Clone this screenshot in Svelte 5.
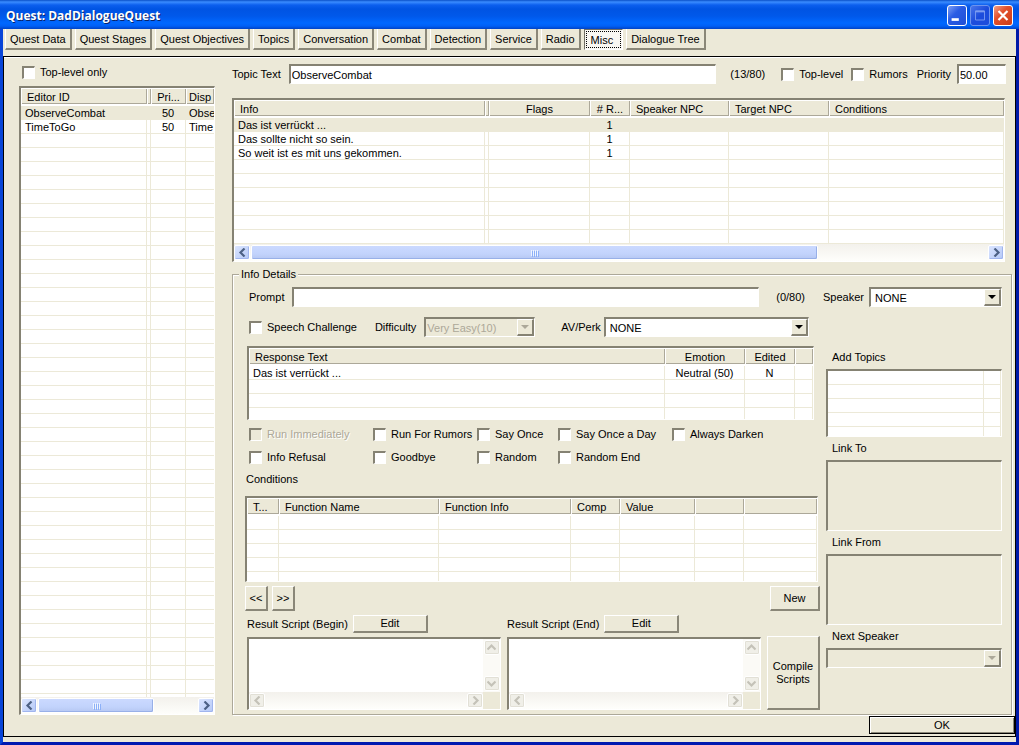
<script lang="ts">
  type Column = { label: string; width?: number; center?: boolean };

  const tabs = [
    'Quest Data', 'Quest Stages', 'Quest Objectives', 'Topics', 'Conversation', 'Combat',
    'Detection', 'Service', 'Radio', 'Misc', 'Dialogue Tree'
  ];
  let activeTab = $state('Misc');

  const topicColumns: Column[] = [
    { label: 'Editor ID', width: 126 },
    { label: '', width: 4 },
    { label: 'Pri...', width: 35, center: true },
    { label: 'Disp' }
  ];
  const topicRows = [
    ['ObserveCombat', '', '50', 'Obse'],
    ['TimeToGo', '', '50', 'Time']
  ];

  const infoColumns: Column[] = [
    { label: 'Info', width: 251 },
    { label: '', width: 4 },
    { label: 'Flags', width: 101, center: true },
    { label: '# R...', width: 40, center: true },
    { label: 'Speaker NPC', width: 99 },
    { label: 'Target NPC', width: 100 },
    { label: 'Conditions' }
  ];
  const infoRows = [
    ['Das ist verrückt ...', '', '', '1', '', '', ''],
    ['Das sollte nicht so sein.', '', '', '1', '', '', ''],
    ['So weit ist es mit uns gekommen.', '', '', '1', '', '', '']
  ];

  const responseColumns: Column[] = [
    { label: 'Response Text' },
    { label: 'Emotion', width: 80, center: true },
    { label: 'Edited', width: 50, center: true },
    { label: '', width: 18 }
  ];
  const responseRows = [['Das ist verrückt ...', 'Neutral (50)', 'N', '']];

  const conditionColumns: Column[] = [
    { label: 'T...', width: 32 },
    { label: 'Function Name', width: 160 },
    { label: 'Function Info', width: 132 },
    { label: 'Comp', width: 49 },
    { label: 'Value', width: 75 },
    { label: '', width: 49 },
    { label: '' }
  ];

  const flags = [
    { label: 'Run Immediately', disabled: true },
    { label: 'Run For Rumors' },
    { label: 'Say Once' },
    { label: 'Say Once a Day' },
    { label: 'Always Darken' },
    { label: 'Info Refusal' },
    { label: 'Goodbye' },
    { label: 'Random' },
    { label: 'Random End' }
  ];
</script>

{#snippet check(label: string, disabled = false)}
  <label class="check" class:disabled>
    <input type="checkbox" {disabled} />
    {label}
  </label>
{/snippet}

{#snippet arrow(dir: string)}
  <svg class="arrow {dir}" viewBox="0 0 9 9" width="9" height="9" aria-hidden="true">
    <path d="M6.5 0.5 L2.5 4.5 L6.5 8.5" fill="none" stroke="currentColor" stroke-width="2.2" />
  </svg>
{/snippet}

{#snippet hscroll(size: number)}
  <div class="hbar">
    <button class="sb" aria-label="Scroll left">{@render arrow('left')}</button>
    <div class="track">
      <div class="thumb" style="width: {size}%"><i></i><i></i><i></i><i></i></div>
    </div>
    <button class="sb" aria-label="Scroll right">{@render arrow('right')}</button>
  </div>
{/snippet}

{#snippet grid(columns: Column[], rows: string[][], blank: number, selected = -1, header = true)}
  <table>
    <colgroup>
      {#each columns as col}
        <col style={col.width ? `width: ${col.width}px` : undefined} />
      {/each}
    </colgroup>
    {#if header}
      <thead>
        <tr>
          {#each columns as col}
            <th class:center={col.center}>{col.label}</th>
          {/each}
        </tr>
      </thead>
    {/if}
    <tbody>
      {#each rows as row, i}
        <tr class:selected={i === selected}>
          {#each row as cell, c}
            <td class:center={columns[c].center}>{cell}</td>
          {/each}
        </tr>
      {/each}
      {#each Array(blank) as _}
        <tr>
          {#each columns as _col}<td></td>{/each}
        </tr>
      {/each}
    </tbody>
  </table>
{/snippet}

{#snippet script(id: string, label: string)}
  <div class="script">
    <div class="script-head">
      <label for={id}>{label}</label>
      <button class="btn edit">Edit</button>
    </div>
    <div class="script-box sunken">
      <textarea {id}></textarea>
      <div class="vbar">
        <button class="sb" disabled aria-label="Scroll up">{@render arrow('up')}</button>
        <button class="sb" disabled aria-label="Scroll down">{@render arrow('down')}</button>
      </div>
      <div class="hbar">
        <button class="sb" disabled aria-label="Scroll left">{@render arrow('left')}</button>
        <div class="track"></div>
        <button class="sb" disabled aria-label="Scroll right">{@render arrow('right')}</button>
      </div>
    </div>
  </div>
{/snippet}

{#snippet combo(id: string, value: string, disabled = false)}
  <span class="combo sunken" class:disabled>
    <select {id} {disabled}>
      <option>{value}</option>
    </select>
    <span class="drop" aria-hidden="true"></span>
  </span>
{/snippet}

<div class="window">
  <header class="titlebar">
    <h1>Quest: DadDialogueQuest</h1>
    <button class="sys" aria-label="Minimize">
      <svg viewBox="0 0 20 20"><path d="M4 13h8v3H4z" fill="#fff" /></svg>
    </button>
    <button class="sys dim" aria-label="Maximize" disabled>
      <svg viewBox="0 0 20 20">
        <path d="M5 5h10v10H5z" fill="none" stroke="#7d9cf0" />
        <path d="M5 4.5h10v2H5z" fill="#7d9cf0" />
      </svg>
    </button>
    <button class="sys close" aria-label="Close">
      <svg viewBox="0 0 20 20"><path d="M5 5l10 10M15 5L5 15" stroke="#fff" stroke-width="2.4" /></svg>
    </button>
  </header>

  <div class="client">
    <nav class="tabs">
      {#each tabs as tab}
        <button class="tab" class:active={tab === activeTab} onclick={() => (activeTab = tab)}>{tab}</button>
      {/each}
    </nav>

    <main class="panel">
      <div class="columns">
        <aside>
          <div class="top-only">{@render check('Top-level only')}</div>
          <div class="list sunken topics">
            <div class="rows">{@render grid(topicColumns, topicRows, 60, 0)}</div>
            {@render hscroll(73)}
          </div>
        </aside>

        <section class="detail">
          <div class="topic-row">
            <label for="topic">Topic Text</label>
            <input id="topic" class="text sunken" value="ObserveCombat" />
            <span class="count">(13/80)</span>
            {@render check('Top-level')}
            {@render check('Rumors')}
            <label for="priority" class="priority">Priority</label>
            <input id="priority" class="text sunken" value="50.00" />
          </div>

          <div class="list sunken infos">
            {@render grid(infoColumns, infoRows, 6, 0)}
            {@render hscroll(77)}
          </div>

          <fieldset>
            <legend>Info Details</legend>
            <div class="prompt-row">
              <label for="prompt">Prompt</label>
              <input id="prompt" class="text sunken" />
              <span class="count">(0/80)</span>
              <label for="speaker" class="speaker">Speaker</label>
              {@render combo('speaker', 'NONE')}
            </div>

            <div class="body">
              <div class="left">
                <div class="challenge-row">
                  {@render check('Speech Challenge')}
                  <label for="difficulty" class="difficulty">Difficulty</label>
                  {@render combo('difficulty', 'Very Easy(10)', true)}
                  <label for="perk" class="perk">AV/Perk</label>
                  {@render combo('perk', 'NONE')}
                </div>

                <div class="list sunken responses">
                  {@render grid(responseColumns, responseRows, 3)}
                </div>

                <div class="flags">
                  {#each flags as flag}
                    {@render check(flag.label, flag.disabled)}
                  {/each}
                </div>

                <h2>Conditions</h2>
                <div class="list sunken conditions">
                  {@render grid(conditionColumns, [], 5)}
                </div>

                <div class="actions">
                  <button class="btn">&lt;&lt;</button>
                  <button class="btn">&gt;&gt;</button>
                  <button class="btn new">New</button>
                </div>

                <div class="scripts">
                  {@render script('begin', 'Result Script (Begin)')}
                  {@render script('end', 'Result Script (End)')}
                  <button class="btn compile">Compile Scripts</button>
                </div>
              </div>

              <div class="links">
                <h3>Add Topics</h3>
                <div class="list sunken add">
                  {@render grid([{ label: '' }, { label: '', width: 17 }], [], 5, -1, false)}
                </div>
                <h3>Link To</h3>
                <div class="sunken link"></div>
                <h3>Link From</h3>
                <div class="sunken link"></div>
                <h3><label for="next">Next Speaker</label></h3>
                {@render combo('next', '', true)}
              </div>
            </div>
          </fieldset>
        </section>
      </div>

      <footer>
        <button class="btn ok">OK</button>
      </footer>
    </main>
  </div>
</div>

<style>
  :global(body) {
    background: #ece9d8;
  }

  .window,
  .window * {
    box-sizing: border-box;
  }

  .window {
    display: flex;
    flex-direction: column;
    min-height: 100vh;
    border: solid;
    border-width: 0 3px 3px;
    border-color: #0028b8 #0019a8 #0019b0 #0845d8;
    font-family: 'Liberation Sans', Arial, sans-serif;
    font-size: 11px;
    line-height: 14px;
    color: #000;
  }

  button,
  input,
  select,
  textarea {
    font: inherit;
    color: inherit;
    margin: 0;
    padding: 0;
    border: 0;
    border-radius: 0;
  }

  .titlebar {
    display: flex;
    align-items: center;
    gap: 3px;
    height: 29px;
    margin: 0 -3px;
    padding: 2px 6px 0;
    background: linear-gradient(#0a50c8 0, #3a8cff 2px, #0c5fee 5px, #0054e3 9px, #0058ea 16px, #0068ff 23px, #0060f6 26px, #0043c6 29px);
  }

  h1 {
    flex: 1;
    margin: 0;
    font-family: 'Open Sans', sans-serif;
    font-size: 12px;
    font-weight: 700;
    line-height: 20px;
    color: #fff;
    text-shadow: 1px 1px #0a246a;
  }

  .sys {
    width: 20px;
    height: 21px;
    border: 1px solid #fff;
    border-radius: 3px;
    background: linear-gradient(135deg, #7fa0f5, #2a5ce4 40%, #1f4fd6);
  }

  .sys svg {
    display: block;
    width: 100%;
    height: 100%;
  }

  .sys.dim {
    border-color: #6d93ee;
    background: linear-gradient(135deg, #4a76ea, #1c4cdc 50%);
  }

  .sys.close {
    background: linear-gradient(135deg, #f0a088, #e2502c 40%, #cc3c18);
  }

  .client {
    flex: 1;
    display: flex;
    flex-direction: column;
    padding-bottom: 5px;
    background: #ece9d8;
  }

  .tabs {
    display: flex;
    gap: 3px;
    height: 27px;
    padding: 0 2px 6px;
  }

  .tab {
    padding: 0 4px;
    border: solid;
    border-width: 0 2px 2px 1px;
    border-color: #fff #8a8778 #8a8778 #fff;
    background: #ece9d8;
    white-space: nowrap;
  }

  .tab.active {
    padding: 1px 9px 0 6px;
    border-width: 1px;
    border-color: #716f64 #fff #fff #716f64;
    background: #f8f7f2;
    outline: 1px dotted #000;
    outline-offset: -3px;
  }

  .panel {
    flex: 1;
    display: flex;
    flex-direction: column;
    border: 1px solid #000;
    box-shadow: inset 0 1px #fff;
  }

  .columns {
    flex: 1;
    display: grid;
    grid-template-columns: 196px 1fr;
    gap: 17px;
    padding: 7px 3px 0 15px;
  }

  aside {
    display: flex;
    flex-direction: column;
    min-height: 0;
  }

  .top-only {
    padding: 1px 0 7px 3px;
  }

  .sunken {
    border: solid;
    border-width: 2px 1px 1px 2px;
    border-color: #858273 #fff #fff #858273;
  }

  .list {
    display: flex;
    flex-direction: column;
    background: #fff;
    overflow: hidden;
  }

  .topics {
    flex: 1 1 0;
  }

  .topics :is(th, td):last-child {
    padding-left: 3px;
    border-right: 0;
  }

  .rows {
    flex: 1 1 0;
    min-height: 0;
    overflow: hidden;
  }

  table {
    width: 100%;
    table-layout: fixed;
    border-spacing: 0;
  }

  th,
  td {
    padding: 0 0 0 6px;
    overflow: hidden;
    white-space: nowrap;
    text-align: left;
    font-weight: 400;
  }

  th {
    height: 18px;
    padding-top: 1px;
    border-bottom: 2px solid #fff;
    background: #ece9d8;
    background-clip: padding-box;
    box-shadow: inset 1px 1px #fff, inset -1px -1px #aca899;
  }

  td {
    height: 14px;
    padding-top: 2px;
    line-height: 11px;
    border-right: 1px solid #ece9d8;
    border-bottom: 1px solid #ece9d8;
  }

  td:first-child {
    padding-left: 4px;
  }

  .center {
    padding-left: 0;
    text-align: center;
  }

  .selected td {
    background: #ece9d8;
  }

  .check {
    display: flex;
    align-items: center;
    gap: 5px;
    white-space: nowrap;
  }

  .check input {
    appearance: none;
    flex: none;
    width: 13px;
    height: 13px;
    border: solid;
    border-width: 2px 1px 1px 2px;
    border-color: #858273 #fff #fff #858273;
    background: #fff;
  }

  .check input:checked {
    background: radial-gradient(#000 3px, #fff 4px);
  }

  .check.disabled {
    color: #aca899;
    text-shadow: 1px 1px #fff;
  }

  .check.disabled input {
    background: #ece9d8;
  }

  .hbar {
    display: flex;
    flex: none;
    height: 17px;
    padding: 1px 0;
    background: linear-gradient(#f3f1ec, #fefefb);
  }

  .track {
    flex: 1;
    padding: 0 1px;
  }

  .sb {
    display: grid;
    place-items: center;
    flex: none;
    width: 16px;
    height: 15px;
    border: 1px solid #fff;
    border-radius: 2px;
    background: linear-gradient(135deg, #dbe5ff, #b4c8f6);
    box-shadow: inset -1px -1px #a0b5ee;
    color: #4d6185;
  }

  .sb:disabled {
    background: #f0efe8;
    box-shadow: inset 0 0 0 1px #e2e0d6;
    color: #c4c2b8;
  }

  .arrow.right {
    transform: rotate(180deg);
  }

  .arrow.up {
    transform: rotate(90deg);
  }

  .arrow.down {
    transform: rotate(-90deg);
  }

  .thumb {
    display: flex;
    align-items: center;
    justify-content: center;
    gap: 1px;
    height: 15px;
    border: 1px solid #fff;
    border-radius: 2px;
    background: linear-gradient(#cbd9ff, #c2d3fc 60%, #b5c7f2);
    box-shadow: inset -1px -1px #98b0e8;
  }

  .thumb i {
    width: 1px;
    height: 6px;
    background: #eef4fe;
    box-shadow: 1px 1px #8cb0f8;
  }

  .detail {
    display: flex;
    flex-direction: column;
    min-width: 0;
  }

  .topic-row,
  .prompt-row,
  .challenge-row {
    display: flex;
    align-items: center;
    height: 20px;
  }

  .topic-row {
    gap: 6px;
    padding-right: 6px;
  }

  .text {
    width: 49px;
    height: 20px;
    padding: 0 1px;
    background: #fff;
  }

  #topic,
  #prompt {
    flex: 1;
  }

  #topic {
    margin-left: 2px;
  }

  .topic-row .count {
    margin: 0 10px 0 8px;
  }

  .topic-row .check + .check {
    margin-left: 2px;
  }

  .priority {
    margin-left: 3px;
  }

  .infos {
    margin: 14px 7px 5px 0;
  }

  fieldset {
    flex: 1;
    min-width: 0;
    margin: 0;
    padding: 6px 9px 3px 12px;
    border: 1px solid #aca899;
    box-shadow: 1px 1px #fff, inset 1px 1px #fff;
  }

  legend {
    margin-left: -6px;
    padding: 0 2px;
    background: #ece9d8;
  }

  .prompt-row {
    gap: 8px;
    padding-left: 4px;
  }

  .prompt-row .count {
    margin: 0 10px 0 9px;
  }

  .speaker {
    margin-right: -3px;
  }

  .prompt-row .combo {
    width: 133px;
  }

  .combo {
    position: relative;
    display: block;
    height: 20px;
    background: #fff;
  }

  .combo select {
    appearance: none;
    display: block;
    width: 100%;
    height: 17px;
    padding: 0 18px 0 4px;
    background: transparent;
  }

  .combo.disabled {
    background: #ece9d8;
  }

  .combo.disabled select {
    padding-left: 1px;
    color: #aca899;
    opacity: 1;
  }

  .drop {
    position: absolute;
    top: 0;
    right: 0;
    display: grid;
    place-items: center;
    width: 17px;
    height: 17px;
    border: solid;
    border-width: 1px 2px 2px 1px;
    border-color: #fff #858273 #858273 #fff;
    background: #ece9d8;
    pointer-events: none;
  }

  .drop::after {
    content: '';
    border: 4px solid transparent;
    border-top-color: #000;
    border-bottom: 0;
  }

  .disabled .drop::after {
    border-top-color: #aca899;
  }

  .body {
    display: grid;
    grid-template-columns: 1fr 176px;
    gap: 6px;
    padding-top: 10px;
  }

  .left {
    min-width: 0;
  }

  .challenge-row {
    padding: 0 11px 0 4px;
  }

  .difficulty {
    margin: 0 8px 0 18px;
  }

  .challenge-row .combo.disabled {
    width: 111px;
  }

  .perk {
    margin: 0 3px 0 26px;
  }

  .perk + .combo {
    flex: 1;
  }

  .responses {
    height: 74px;
    margin: 9px 6px 7px 2px;
  }

  .flags {
    display: grid;
    grid-template-columns: 124px 104px 81px 114px 1fr;
    row-gap: 9px;
    padding-left: 4px;
  }

  h2,
  h3 {
    margin: 0;
    font-size: 11px;
    font-weight: 400;
  }

  h2 {
    padding: 8px 1px 10px;
  }

  .conditions {
    height: 86px;
    margin-right: 2px;
  }

  .actions {
    display: flex;
    gap: 4px;
    padding-top: 4px;
  }

  .btn {
    min-width: 23px;
    height: 25px;
    border: solid;
    border-width: 1px 2px 2px 1px;
    border-color: #fff #8a8778 #8a8778 #fff;
    background: #ece9d8;
  }

  .btn.new {
    width: 50px;
    margin-left: auto;
  }

  .scripts {
    display: grid;
    grid-template-columns: 1fr 1fr 53px;
    gap: 6px;
    padding: 4px 0 0 2px;
  }

  .script-head {
    display: flex;
    align-items: center;
    gap: 5px;
    padding-bottom: 4px;
  }

  .btn.edit {
    width: 75px;
    height: 18px;
    line-height: 13px;
  }

  .script-box {
    display: grid;
    grid-template-columns: 1fr 17px;
    grid-template-rows: 1fr 17px;
    height: 73px;
    background: #ece9d8;
  }

  textarea {
    width: 100%;
    height: 100%;
    resize: none;
    background: #fff;
    overflow: hidden;
  }

  .vbar {
    display: flex;
    flex-direction: column;
    align-items: center;
    justify-content: space-between;
    padding: 1px 0;
    background: #fbfaf6;
  }

  .btn.compile {
    align-self: end;
    height: 74px;
    line-height: 13px;
  }

  .links {
    padding-top: 29px;
  }

  h3 {
    padding: 4px 6px 5px;
  }

  .add {
    height: 68px;
  }

  .link {
    height: 71px;
  }

  footer {
    display: flex;
    justify-content: flex-end;
    padding: 1px 0 2px;
  }

  .btn.ok {
    width: 146px;
    height: 18px;
    border: 1px solid #000;
    box-shadow: inset 1px 1px #fff, inset -1px -1px #8a8778;
    line-height: 14px;
  }
</style>
